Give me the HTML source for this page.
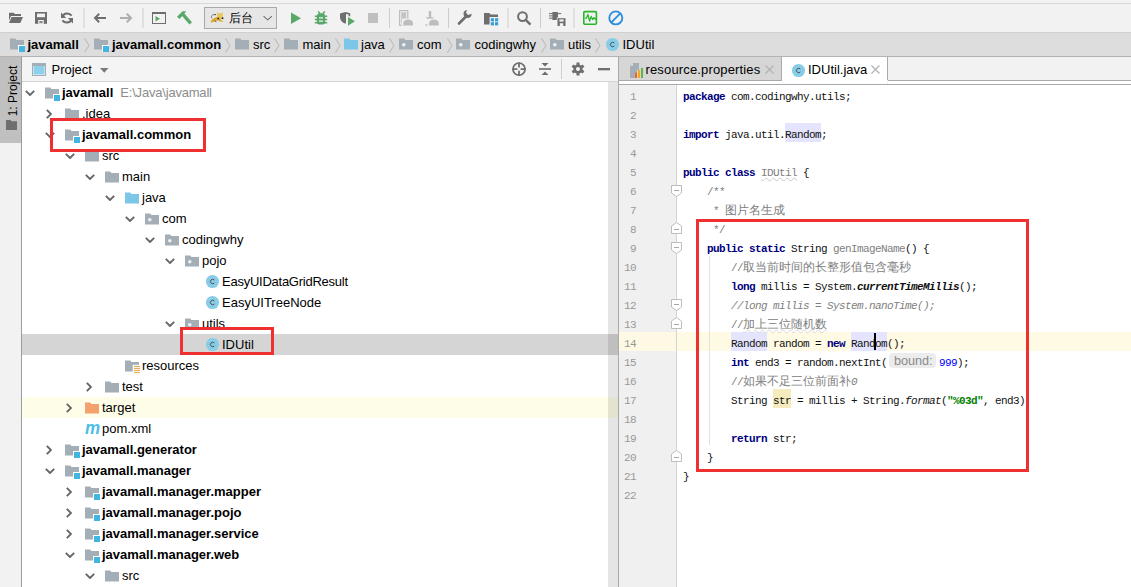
<!DOCTYPE html>
<html><head><meta charset="utf-8"><title>IDEA</title><style>
*{margin:0;padding:0;box-sizing:border-box}
html,body{width:1131px;height:587px;overflow:hidden;background:#f2f2f2}
body{position:relative;font-family:"Liberation Sans",sans-serif;font-size:13px;color:#000}
.a{position:absolute}
.ln{position:absolute;background:#c9c9c9}
svg.i{position:absolute;overflow:visible}
.t{position:absolute;white-space:pre;line-height:21px;height:21px}
.b{font-weight:bold}
.code{position:absolute;left:683px;white-space:pre;font-family:"Liberation Mono",monospace;font-size:11px;letter-spacing:-0.6px;line-height:19px;height:19px;color:#111}
.k{color:#000080;font-weight:bold}
.cm{color:#808080}
.cmi{color:#808080;font-style:italic}
.cj{font-size:12px;letter-spacing:0}
.gr{color:#808080}
.num{position:absolute;left:619px;width:17px;text-align:right;font-family:"Liberation Mono",monospace;font-size:11px;letter-spacing:-0.6px;line-height:19px;color:#999}
</style></head>
<body>

<svg width="0" height="0" style="position:absolute">
<defs>
<symbol id="fold" viewBox="0 0 16 16"><path d="M1 2.5h5.2l1.3 1.5H15v9.5H1z" fill="#a3aeb6"/></symbol>
<symbol id="modf" viewBox="0 0 16 16"><path d="M1 2.5h5.2l1.3 1.5H15v9.5H1z" fill="#a3aeb6"/><rect x="9" y="9" width="7" height="7" fill="#fff"/><rect x="10" y="10" width="6" height="6" fill="#40b6e0"/></symbol>
<symbol id="srcf" viewBox="0 0 16 16"><path d="M1 2.5h5.2l1.3 1.5H15v9.5H1z" fill="#7cc7e8"/></symbol>
<symbol id="tgtf" viewBox="0 0 16 16"><path d="M1 2.5h5.2l1.3 1.5H15v9.5H1z" fill="#f4a26d"/></symbol>
<symbol id="pkgf" viewBox="0 0 16 16"><path d="M1 2.5h5.2l1.3 1.5H15v9.5H1z" fill="#a3aeb6"/><circle cx="5.8" cy="8.8" r="1.8" fill="#eef1f3"/></symbol>
<symbol id="resf" viewBox="0 0 16 16"><path d="M1 2.5h5.2l1.3 1.5H15v9.5H1z" fill="#a3aeb6"/><rect x="8.7" y="6.8" width="8" height="10" fill="#fff"/><path d="M10 8.4h6M10 10.4h6M10 12.4h6M10 14.4h6" stroke="#e3a33c" stroke-width="1"/></symbol>
<symbol id="cls" viewBox="0 0 16 16"><circle cx="8" cy="8" r="7" fill="#87cde8"/><path d="M10 6.4A2.4 2.4 0 1 0 10 9.6" fill="none" stroke="#4a4a4a" stroke-width="1"/></symbol>
<symbol id="chd" viewBox="0 0 10 6"><path d="M0.8 0.8L5 5l4.2-4.2" fill="none" stroke="#666" stroke-width="1.9"/></symbol>
<symbol id="chr" viewBox="0 0 6 10"><path d="M0.8 0.8L5 5l-4.2 4.2" fill="none" stroke="#666" stroke-width="1.9"/></symbol>
<symbol id="foldS" viewBox="0 0 11 12"><path d="M0.5 0.5h10v7.5l-5 3.5l-5-3.5z" fill="#fff" stroke="#bdbdbd"/><path d="M3 5.5h5" stroke="#a8a8a8"/></symbol>
<symbol id="foldE" viewBox="0 0 11 12"><path d="M0.5 11.5h10V4l-5-3.5L0.5 4z" fill="#fff" stroke="#bdbdbd"/><path d="M3 7.5h5" stroke="#a8a8a8"/></symbol>
</defs></svg>

<div class="a" style="left:0px;top:3px;width:1131px;height:1px;background:#d9d9d9"></div>
<div class="a" style="left:0px;top:32px;width:1131px;height:1px;background:#d0d0d0"></div>
<div class="a" style="left:0px;top:33px;width:1131px;height:23px;background:#dddddd"></div>
<div class="a" style="left:0px;top:56px;width:1131px;height:1px;background:#b3b3b3"></div>

<svg class="i" style="left:0;top:4px" width="640" height="28" viewBox="0 4 640 28">
<!-- open folder -->
<path d="M9 12.8h4.6l1.3 1.3H21v2h-10l-2 4.6z" fill="#6e6e6e"/><path d="M11.6 17.1H23l-2.7 5.9H9z" fill="#6e6e6e"/>
<!-- save -->
<path d="M35 12h12v11.8H35z" fill="#6e6e6e"/><rect x="37" y="13.6" width="8" height="3.6" fill="#f2f2f2"/><rect x="38.2" y="20" width="5.6" height="3.8" fill="#f2f2f2"/><rect x="39.4" y="21.2" width="3.2" height="1.6" fill="#6e6e6e"/>
<!-- sync -->
<path d="M71.6 15.6A5.5 5.5 0 0 0 62.3 16.5" fill="none" stroke="#6e6e6e" stroke-width="2"/><path d="M61 12.5v5.6h5.2z" fill="#6e6e6e"/>
<path d="M62.4 20.4A5.5 5.5 0 0 0 71.7 19.5" fill="none" stroke="#6e6e6e" stroke-width="2"/><path d="M73 23.6v-5.6h-5.2z" fill="#6e6e6e"/>
<rect x="83.5" y="8" width="1" height="20" fill="#cdcdcd"/>
<!-- back -->
<path d="M106 18H95M99.2 13.8L95 18l4.2 4.2" fill="none" stroke="#6e6e6e" stroke-width="2"/>
<path d="M120 18h11M126.8 13.8L131 18l-4.2 4.2" fill="none" stroke="#aeaeae" stroke-width="2"/>
<rect x="142.5" y="8" width="1" height="20" fill="#cdcdcd"/>
<!-- terminal -->
<rect x="152.5" y="12.5" width="13" height="11" fill="none" stroke="#6e6e6e" stroke-width="1"/><rect x="152" y="12" width="14" height="2" fill="#6e6e6e"/><path d="M155.5 16v5.5l4.5-2.75z" fill="#59a869"/>
<!-- hammer -->
<path d="M177 16.8L182.6 11.2H186.3L179.6 18.9z" fill="#59a869"/><path d="M180.8 14.6L183.2 12.3L192 22.3L189.5 24.6z" fill="#59a869"/>
<!-- combo -->
<rect x="204.5" y="7.5" width="72" height="21" fill="#e6e6e6" stroke="#a9a9a9"/>
<path d="M210.3 22c1.5-2.6 3.6-4.3 6.2-4.8l4.8-.3 1.6 1.6-2.6 1.1 3.4 2.2-3.6-.4-2.8-1.2-2.6 1.2-2.4 1.2z" fill="#dcaa2c"/><path d="M217 12l1.4 1.2h3l1.4-1.2v5.4l-1.3 1.2h-3.2l-1.3-1.2z" fill="#e9c65c"/><circle cx="218.2" cy="18.4" r=".9" fill="#222"/><circle cx="222.6" cy="18.2" r=".9" fill="#222"/><path d="M211.5 18.2c-.6-2 .6-3.6 2.4-3.6h1.2" fill="none" stroke="#555" stroke-width=".7"/><circle cx="215.2" cy="14.6" r=".7" fill="#222"/><path d="M214.8 20.5l1.6 1.6" stroke="#222" stroke-width=".8"/>
<path d="M263.5 16.2l4.2 3.6 4.2-3.6" fill="none" stroke="#6e6e6e" stroke-width="1.1"/>
<!-- run -->
<path d="M291 12.5v11.5l10-5.75z" fill="#59a869"/>
<!-- debug -->
<path d="M318.2 11.4l2 2.3M324.8 11.4l-2 2.3" stroke="#59a869" stroke-width="1.5"/>
<rect x="316.8" y="13.2" width="8.4" height="11.4" rx="3.4" fill="#59a869"/>
<path d="M314.8 16.3h12.4M314.8 19.5h12.4M314.8 22.7h12.4" stroke="#59a869" stroke-width="1.5"/>
<path d="M319 17.9h4M319 21.1h4" stroke="#f2f2f2" stroke-width="1.3"/>
<!-- coverage -->
<path d="M340 13.4L345.3 12 350.2 13.2V16.3H348.6V14.6L346 14.1V22.3L345.6 23.8C342.4 22.6 340 20 340 17.2z" fill="#6e6e6e"/><path d="M348 16.9v8.9l6.9-4.45z" fill="#59a869"/>
<!-- stop -->
<rect x="368" y="13" width="10" height="10" fill="#c0c0c0"/>
<rect x="389" y="8" width="1" height="20" fill="#cdcdcd"/>
<!-- avd -->
<rect x="399.6" y="10.6" width="8.2" height="14.6" fill="none" stroke="#bdbdbd" stroke-width="1.2"/><rect x="401.2" y="12.2" width="5" height="11" fill="#c4c4c4"/>
<rect x="402" y="18.6" width="12" height="7.4" fill="#f2f2f2"/><path d="M403.2 25.6v-2.2c0-2.4 2.2-3.8 4.9-3.8s4.9 1.4 4.9 3.8v2.2z" fill="#bdbdbd"/>
<!-- sdk dl -->
<path d="M430 11v8" stroke="#bdbdbd" stroke-width="2.4"/><path d="M425.8 17.2l4.2 4.2 4.2-4.2z" fill="#bdbdbd"/>
<rect x="428" y="18.6" width="12" height="7.4" fill="#f2f2f2"/><path d="M429 25.6v-2.2c0-2.4 2.2-3.8 4.9-3.8s4.9 1.4 4.9 3.8v2.2z" fill="#bdbdbd"/><rect x="425" y="24.4" width="2.6" height="1.2" fill="#bdbdbd"/>
<rect x="448" y="8" width="1" height="20" fill="#cdcdcd"/>
<!-- wrench -->
<path d="M459 23.5l6.5-6.5" stroke="#6e6e6e" stroke-width="2.6" stroke-linecap="round"/><path d="M471.5 13.5a4 4 0 1 1-4.5-3.4l-1 2.7 2.1 2.1 2.9-1z" fill="#6e6e6e"/>
<!-- project structure -->
<path d="M484 13h5.2l1.5 1.6h7.3v6.2h-4v3.8H484z" fill="#6e6e6e"/><rect x="489.6" y="17" width="9.8" height="9.2" fill="#f2f2f2"/><rect x="490.8" y="18.2" width="3.2" height="3.2" fill="#389fd6"/><rect x="495" y="18.2" width="3.2" height="3.2" fill="#389fd6"/><rect x="490.8" y="22.2" width="3.2" height="3.2" fill="#389fd6"/><rect x="495" y="22.2" width="3.2" height="3.2" fill="#389fd6"/>
<rect x="507.5" y="8" width="1" height="20" fill="#cdcdcd"/>
<!-- search -->
<circle cx="522.5" cy="16.6" r="4.4" fill="none" stroke="#6e6e6e" stroke-width="2"/><path d="M525.7 19.8l4.8 4.8" stroke="#6e6e6e" stroke-width="2.4"/>
<rect x="540" y="8" width="1" height="20" fill="#cdcdcd"/>
<!-- sdk manager -->
<rect x="552.3" y="12" width="5.6" height="8" fill="#6e6e6e"/><path d="M549 13.6h3.3M549 15.9h3.3M549 18.2h3.3M557.9 13.6h3.3" stroke="#6e6e6e" stroke-width="1"/>
<rect x="556.8" y="17.6" width="8.6" height="8.4" fill="#f2f2f2"/><rect x="557.5" y="18.2" width="8" height="7.8" fill="#6e6e6e"/><rect x="559.4" y="19.4" width="4.2" height="2.2" fill="#f2f2f2"/><rect x="559.8" y="23.2" width="3.4" height="2.8" fill="#f2f2f2"/>
<rect x="573.5" y="8" width="1" height="20" fill="#cdcdcd"/>
<!-- monitor -->
<rect x="583.8" y="11.6" width="12.6" height="12.6" rx="1" fill="none" stroke="#28b62c" stroke-width="1.6"/><path d="M585.2 18.3l1.3-.3 1.4-3.6 1.7 6.6 1.6-4.6 1.4 3.2 1.3-2 1.2 1.6 1.2-.6" fill="none" stroke="#28b62c" stroke-width="1.3" stroke-linejoin="round"/>
<!-- blue no -->
<circle cx="615.8" cy="17.9" r="6.5" fill="none" stroke="#2d8fe0" stroke-width="1.9"/><path d="M611.3 22.4l9-9" stroke="#2d8fe0" stroke-width="1.9"/>
</svg>

<div class="t" style="left:229px;top:8px;font-size:12px;line-height:20px;color:#000">后台</div>
<svg class="i" style="left:9px;top:36px" width="16" height="16"><use href="#modf"/></svg>
<div class="t" style="left:27.5px;top:34px;font-weight:bold;line-height:21px">javamall</div>
<svg class="i" style="left:93px;top:36px" width="16" height="16"><use href="#modf"/></svg>
<div class="t" style="left:112px;top:34px;font-weight:bold;line-height:21px">javamall.common</div>
<svg class="i" style="left:234px;top:36px" width="16" height="16"><use href="#fold"/></svg>
<div class="t" style="left:253px;top:34px;line-height:21px">src</div>
<svg class="i" style="left:283px;top:36px" width="16" height="16"><use href="#fold"/></svg>
<div class="t" style="left:302.5px;top:34px;line-height:21px">main</div>
<svg class="i" style="left:342.5px;top:36px" width="16" height="16"><use href="#srcf"/></svg>
<div class="t" style="left:361px;top:34px;line-height:21px">java</div>
<svg class="i" style="left:397.5px;top:36px" width="16" height="16"><use href="#pkgf"/></svg>
<div class="t" style="left:417px;top:34px;line-height:21px">com</div>
<svg class="i" style="left:455px;top:36px" width="16" height="16"><use href="#pkgf"/></svg>
<div class="t" style="left:474.5px;top:34px;line-height:21px">codingwhy</div>
<svg class="i" style="left:548.5px;top:36px" width="16" height="16"><use href="#pkgf"/></svg>
<div class="t" style="left:568px;top:34px;line-height:21px">utils</div>
<svg class="i" style="left:605px;top:37px" width="15" height="15"><use href="#cls"/></svg>
<div class="t" style="left:622.5px;top:34px;line-height:21px">IDUtil</div>
<svg class="i" style="left:84px;top:38px" width="6" height="16"><path d="M0.5 0.5L5 7.5 0.5 14.5" fill="none" stroke="#b5b5b5" stroke-width="1"/></svg>
<svg class="i" style="left:224.5px;top:38px" width="6" height="16"><path d="M0.5 0.5L5 7.5 0.5 14.5" fill="none" stroke="#b5b5b5" stroke-width="1"/></svg>
<svg class="i" style="left:274px;top:38px" width="6" height="16"><path d="M0.5 0.5L5 7.5 0.5 14.5" fill="none" stroke="#b5b5b5" stroke-width="1"/></svg>
<svg class="i" style="left:334.5px;top:38px" width="6" height="16"><path d="M0.5 0.5L5 7.5 0.5 14.5" fill="none" stroke="#b5b5b5" stroke-width="1"/></svg>
<svg class="i" style="left:389px;top:38px" width="6" height="16"><path d="M0.5 0.5L5 7.5 0.5 14.5" fill="none" stroke="#b5b5b5" stroke-width="1"/></svg>
<svg class="i" style="left:446.5px;top:38px" width="6" height="16"><path d="M0.5 0.5L5 7.5 0.5 14.5" fill="none" stroke="#b5b5b5" stroke-width="1"/></svg>
<svg class="i" style="left:540.5px;top:38px" width="6" height="16"><path d="M0.5 0.5L5 7.5 0.5 14.5" fill="none" stroke="#b5b5b5" stroke-width="1"/></svg>
<svg class="i" style="left:595px;top:38px" width="6" height="16"><path d="M0.5 0.5L5 7.5 0.5 14.5" fill="none" stroke="#b5b5b5" stroke-width="1"/></svg>
<div class="a" style="left:0px;top:57px;width:21px;height:86px;background:#c0c0c0"></div>
<div class="a" style="left:21px;top:57px;width:1px;height:530px;background:#9c9c9c"></div>
<div class="a" style="left:-17.5px;top:84px;width:60px;height:14px;transform:rotate(-90deg);font-size:12px;line-height:14px;text-align:center;color:#000;white-space:pre"><u style="text-decoration:none">1</u>: Project</div>
<svg class="i" style="left:6px;top:120px" width="11" height="10"><path d="M0 0h4.5l1 1.2H11V10H0z" fill="#6e6e6e"/></svg>
<div class="a" style="left:22px;top:57px;width:596px;height:24px;background:#f4f4f4"></div>
<div class="a" style="left:22px;top:81px;width:596px;height:1px;background:#d4d4d4"></div>
<div class="a" style="left:22px;top:82px;width:596px;height:505px;background:#fff"></div>
<svg class="i" style="left:32px;top:63px" width="14" height="13"><rect x="0.5" y="0.5" width="13" height="12" fill="none" stroke="#a3aeb6"/><rect x="0" y="0" width="14" height="3" fill="#a3aeb6"/><rect x="1.5" y="3" width="11" height="8.5" fill="#8dd0ec"/></svg>
<div class="t" style="left:51.5px;top:59px;line-height:21px">Project</div>
<svg class="i" style="left:100px;top:68px" width="9" height="5"><path d="M0 0h8.5L4.25 4.8z" fill="#7a7a7a"/></svg>
<svg class="i" style="left:500px;top:56px" width="120" height="26" viewBox="500 56 120 26">
<circle cx="519" cy="69.1" r="6.1" fill="none" stroke="#6e6e6e" stroke-width="1.7"/><path d="M519 62.5V67.5M519 70.7V75.7M512.4 69.1H517.4M520.6 69.1H525.6" stroke="#6e6e6e" stroke-width="1.8"/>
<rect x="539" y="68.2" width="12" height="1.6" fill="#6e6e6e"/><path d="M541.5 63h7l-3.5 3.6z M541.5 75h7l-3.5-3.6z" fill="#6e6e6e"/>
<rect x="561" y="59" width="1" height="20" fill="#cfcfcf"/>
<g transform="translate(578 69)" fill="#6e6e6e"><circle r="4.6"/><g id="gt"><rect x="-1.5" y="-6.5" width="3" height="13"/></g><rect x="-1.5" y="-6.5" width="3" height="13" transform="rotate(60)"/><rect x="-1.5" y="-6.5" width="3" height="13" transform="rotate(120)"/><circle r="2" fill="#f4f4f4"/></g>
<rect x="598" y="68" width="12" height="2.3" fill="#6e6e6e"/>
</svg>
<div class="a" style="left:22px;top:334px;width:596px;height:21px;background:#d5d5d5"></div>
<div class="a" style="left:22px;top:397px;width:596px;height:21px;background:#fdfde8"></div>
<svg class="i" style="left:25px;top:90px" width="10" height="6"><use href="#chd"/></svg>
<svg class="i" style="left:44px;top:85px" width="16" height="16"><use href="#modf"/></svg>
<div class="t" style="left:62px;top:82px;"><span class="b">javamall</span><span style="color:#8c8c8c;margin-left:7px;letter-spacing:-0.2px">E:\Java\javamall</span></div>
<svg class="i" style="left:46px;top:109px" width="6" height="10"><use href="#chr"/></svg>
<svg class="i" style="left:64px;top:106px" width="16" height="16"><use href="#fold"/></svg>
<div class="t" style="left:82px;top:103px;">.idea</div>
<svg class="i" style="left:45px;top:132px" width="10" height="6"><use href="#chd"/></svg>
<svg class="i" style="left:64px;top:127px" width="16" height="16"><use href="#modf"/></svg>
<div class="t" style="left:82px;top:124px;"><span class="b">javamall.common</span></div>
<svg class="i" style="left:65px;top:153px" width="10" height="6"><use href="#chd"/></svg>
<svg class="i" style="left:84px;top:148px" width="16" height="16"><use href="#fold"/></svg>
<div class="t" style="left:102px;top:145px;">src</div>
<svg class="i" style="left:85px;top:174px" width="10" height="6"><use href="#chd"/></svg>
<svg class="i" style="left:104px;top:169px" width="16" height="16"><use href="#fold"/></svg>
<div class="t" style="left:122px;top:166px;">main</div>
<svg class="i" style="left:105px;top:195px" width="10" height="6"><use href="#chd"/></svg>
<svg class="i" style="left:124px;top:190px" width="16" height="16"><use href="#srcf"/></svg>
<div class="t" style="left:142px;top:187px;">java</div>
<svg class="i" style="left:125px;top:216px" width="10" height="6"><use href="#chd"/></svg>
<svg class="i" style="left:144px;top:211px" width="16" height="16"><use href="#pkgf"/></svg>
<div class="t" style="left:162px;top:208px;">com</div>
<svg class="i" style="left:145px;top:237px" width="10" height="6"><use href="#chd"/></svg>
<svg class="i" style="left:164px;top:232px" width="16" height="16"><use href="#pkgf"/></svg>
<div class="t" style="left:182px;top:229px;">codingwhy</div>
<svg class="i" style="left:165px;top:258px" width="10" height="6"><use href="#chd"/></svg>
<svg class="i" style="left:184px;top:253px" width="16" height="16"><use href="#pkgf"/></svg>
<div class="t" style="left:202px;top:250px;">pojo</div>
<svg class="i" style="left:205px;top:274px" width="15" height="15"><use href="#cls"/></svg>
<div class="t" style="left:222px;top:271px;"><span style="letter-spacing:-0.25px">EasyUIDataGridResult</span></div>
<svg class="i" style="left:205px;top:295px" width="15" height="15"><use href="#cls"/></svg>
<div class="t" style="left:222px;top:292px;">EasyUITreeNode</div>
<svg class="i" style="left:165px;top:321px" width="10" height="6"><use href="#chd"/></svg>
<svg class="i" style="left:184px;top:316px" width="16" height="16"><use href="#pkgf"/></svg>
<div class="t" style="left:202px;top:313px;">utils</div>
<svg class="i" style="left:205px;top:337px" width="15" height="15"><use href="#cls"/></svg>
<div class="t" style="left:222px;top:334px;">IDUtil</div>
<svg class="i" style="left:124px;top:358px" width="16" height="16"><use href="#resf"/></svg>
<div class="t" style="left:142px;top:355px;">resources</div>
<svg class="i" style="left:86px;top:382px" width="6" height="10"><use href="#chr"/></svg>
<svg class="i" style="left:104px;top:379px" width="16" height="16"><use href="#fold"/></svg>
<div class="t" style="left:122px;top:376px;">test</div>
<svg class="i" style="left:66px;top:403px" width="6" height="10"><use href="#chr"/></svg>
<svg class="i" style="left:84px;top:400px" width="16" height="16"><use href="#tgtf"/></svg>
<div class="t" style="left:102px;top:397px;">target</div>
<div class="a" style="left:85px;top:418px;font:italic bold 17px/21px 'Liberation Sans';color:#4cbde6;transform:scaleY(1.12);transform-origin:0 16px">m</div>
<div class="t" style="left:102px;top:418px;">pom.xml</div>
<svg class="i" style="left:46px;top:445px" width="6" height="10"><use href="#chr"/></svg>
<svg class="i" style="left:64px;top:442px" width="16" height="16"><use href="#modf"/></svg>
<div class="t" style="left:82px;top:439px;"><span class="b">javamall.generator</span></div>
<svg class="i" style="left:45px;top:468px" width="10" height="6"><use href="#chd"/></svg>
<svg class="i" style="left:64px;top:463px" width="16" height="16"><use href="#modf"/></svg>
<div class="t" style="left:82px;top:460px;"><span class="b">javamall.manager</span></div>
<svg class="i" style="left:66px;top:487px" width="6" height="10"><use href="#chr"/></svg>
<svg class="i" style="left:84px;top:484px" width="16" height="16"><use href="#modf"/></svg>
<div class="t" style="left:102px;top:481px;"><span class="b">javamall.manager.mapper</span></div>
<svg class="i" style="left:66px;top:508px" width="6" height="10"><use href="#chr"/></svg>
<svg class="i" style="left:84px;top:505px" width="16" height="16"><use href="#modf"/></svg>
<div class="t" style="left:102px;top:502px;"><span class="b">javamall.manager.pojo</span></div>
<svg class="i" style="left:66px;top:529px" width="6" height="10"><use href="#chr"/></svg>
<svg class="i" style="left:84px;top:526px" width="16" height="16"><use href="#modf"/></svg>
<div class="t" style="left:102px;top:523px;"><span class="b">javamall.manager.service</span></div>
<svg class="i" style="left:65px;top:552px" width="10" height="6"><use href="#chd"/></svg>
<svg class="i" style="left:84px;top:547px" width="16" height="16"><use href="#modf"/></svg>
<div class="t" style="left:102px;top:544px;"><span class="b">javamall.manager.web</span></div>
<svg class="i" style="left:85px;top:573px" width="10" height="6"><use href="#chd"/></svg>
<svg class="i" style="left:104px;top:568px" width="16" height="16"><use href="#fold"/></svg>
<div class="t" style="left:122px;top:565px;">src</div>
<div class="a" style="left:608px;top:82px;width:10px;height:505px;background:rgba(0,0,0,0.1)"></div>
<div class="a" style="left:50px;top:118px;width:156px;height:34px;border:3px solid #ee3030"></div>
<div class="a" style="left:180px;top:327px;width:94px;height:28px;border:3px solid #ee3030"></div>
<div class="a" style="left:618px;top:57px;width:1px;height:530px;background:#a9a9a9"></div>
<div class="a" style="left:619px;top:57px;width:512px;height:23px;background:#f2f2f2"></div>
<div class="a" style="left:619px;top:57px;width:162px;height:23px;background:#d6d6d6"></div>
<div class="a" style="left:781px;top:57px;width:1px;height:23px;background:#a9a9a9"></div>
<div class="a" style="left:782px;top:57px;width:105px;height:27px;background:#fff"></div>
<div class="a" style="left:887px;top:57px;width:1px;height:23px;background:#a9a9a9"></div>
<div class="a" style="left:619px;top:80px;width:163px;height:1px;background:#a9a9a9"></div>
<div class="a" style="left:888px;top:80px;width:243px;height:1px;background:#a9a9a9"></div>
<div class="a" style="left:619px;top:81px;width:163px;height:3px;background:#fff"></div>
<div class="a" style="left:888px;top:81px;width:243px;height:3px;background:#fff"></div>
<div class="a" style="left:619px;top:84px;width:512px;height:1px;background:#a9a9a9"></div>
<svg class="i" style="left:630px;top:63px" width="14" height="15"><path d="M0 3l3-3h6v15H0z" fill="#a3aeb6"/><path d="M3 0v3H0z" fill="#d6d6d6"/><rect x="5" y="9.5" width="2" height="5.5" fill="#f26522"/><rect x="8" y="7" width="2" height="8" fill="#f5a623"/><rect x="11" y="5" width="2" height="10" fill="#62b543"/><rect x="10" y="5" width="1" height="10" fill="#d6d6d6"/><rect x="7" y="7" width="1" height="8" fill="#d6d6d6"/></svg>
<div class="t" style="left:645.5px;top:59px;line-height:21px;letter-spacing:0.15px">resource.properties</div>
<svg class="i" style="left:765px;top:65px" width="9" height="9"><path d="M.5 .5l8 8M8.5 .5l-8 8" stroke="#b3b3b3" stroke-width="1.2"/></svg>
<svg class="i" style="left:791px;top:63px" width="15" height="15"><use href="#cls"/></svg>
<div class="t" style="left:808px;top:59px;line-height:21px">IDUtil.java</div>
<svg class="i" style="left:871px;top:65px" width="9" height="9"><path d="M.5 .5l8 8M8.5 .5l-8 8" stroke="#b3b3b3" stroke-width="1.2"/></svg>
<div class="a" style="left:619px;top:85px;width:512px;height:502px;background:#fff"></div>
<div class="a" style="left:619px;top:85px;width:57px;height:502px;background:#f0f0f0"></div>
<div class="a" style="left:676px;top:85px;width:1px;height:502px;background:#d4d4d4"></div>
<div class="a" style="left:619px;top:332px;width:57px;height:19px;background:#fdf9e4"></div>
<div class="a" style="left:677px;top:332px;width:454px;height:19px;background:#fffae3"></div>
<div class="num" style="top:88px">1</div>
<div class="num" style="top:107px">2</div>
<div class="num" style="top:126px">3</div>
<div class="num" style="top:145px">4</div>
<div class="num" style="top:164px">5</div>
<div class="num" style="top:183px">6</div>
<div class="num" style="top:202px">7</div>
<div class="num" style="top:221px">8</div>
<div class="num" style="top:240px">9</div>
<div class="num" style="top:259px">10</div>
<div class="num" style="top:278px">11</div>
<div class="num" style="top:297px">12</div>
<div class="num" style="top:316px">13</div>
<div class="num" style="top:335px">14</div>
<div class="num" style="top:354px">15</div>
<div class="num" style="top:373px">16</div>
<div class="num" style="top:392px">17</div>
<div class="num" style="top:411px">18</div>
<div class="num" style="top:430px">19</div>
<div class="num" style="top:449px">20</div>
<div class="num" style="top:468px">21</div>
<div class="num" style="top:487px">22</div>
<svg class="i" style="left:671px;top:185px" width="11" height="12"><use href="#foldS"/></svg>
<svg class="i" style="left:671px;top:222px" width="11" height="12"><use href="#foldE"/></svg>
<svg class="i" style="left:671px;top:242px" width="11" height="12"><use href="#foldS"/></svg>
<svg class="i" style="left:671px;top:299px" width="11" height="12"><use href="#foldS"/></svg>
<svg class="i" style="left:671px;top:317px" width="11" height="12"><use href="#foldE"/></svg>
<svg class="i" style="left:671px;top:450px" width="11" height="12"><use href="#foldE"/></svg>
<div class="a" style="left:709px;top:256px;width:1px;height:189px;background:#e2e2e2"></div>
<div class="a" style="left:785px;top:123px;width:36px;height:19px;background:#e4e4ff"></div>
<div class="a" style="left:731px;top:332px;width:36px;height:19px;background:#e4e4ff"></div>
<div class="a" style="left:851px;top:332px;width:36px;height:19px;background:#e4e4ff"></div>
<div class="a" style="left:773px;top:389px;width:18px;height:19px;background:#f6ebbd"></div>
<div class="code" style="top:88px"><span class="k">package</span> com.codingwhy.utils;</div>
<div class="code" style="top:126px"><span class="k">import</span> java.util.Random;</div>
<div class="code" style="top:164px"><span class="k">public</span> <span class="k">class</span> <span class="gr" style="text-decoration:underline wavy #c8c8c8;text-decoration-thickness:1px">IDUtil</span> {</div>
<div class="code" style="top:183px">    <span class="cm">/**</span></div>
<div class="code" style="top:202px">     <span class="cm">* <span class="cj">图片名生成</span></span></div>
<div class="code" style="top:221px">     <span class="cm">*/</span></div>
<div class="code" style="top:240px">    <span class="k">public</span> <span class="k">static</span> String <span class="gr">genImageName</span>() {</div>
<div class="code" style="top:259px">        <span class="cm">//<span class="cj">取当前时间的长整形值包含毫秒</span></span></div>
<div class="code" style="top:278px">        <span class="k">long</span> millis = System.<i class="b">currentTimeMillis</i>();</div>
<div class="code" style="top:297px">        <span class="cmi">//long millis = System.nanoTime();</span></div>
<div class="code" style="top:316px">        <span class="cm">//<span class="cj" style="text-decoration:underline wavy #d8d8d8;text-decoration-thickness:1px">加上三位随机数</span></span></div>
<div class="code" style="top:335px">        Random random = <span class="k">new</span> Random();</div>
<div class="code" style="top:354px">        <span class="k">int</span> end3 = random.nextInt(<span style="display:inline-block;width:52px"></span><span style="color:#0000ff">999</span>);</div>
<div class="code" style="top:373px">        <span class="cm">//<span class="cj">如果不足三位前面补</span><i>0</i></span></div>
<div class="code" style="top:392px">        String str = millis + String.<i>format</i>(<span style="color:#008000;font-weight:bold">"%03d"</span>, end3)</div>
<div class="code" style="top:430px">        <span class="k">return</span> str;</div>
<div class="code" style="top:449px">    }</div>
<div class="code" style="top:468px">}</div>
<div class="a" style="left:889px;top:353px;width:47px;height:15px;background:#ececec;border-radius:4px"></div>
<div class="t" style="left:894px;top:352px;font-size:12.6px;line-height:19px;color:#8a8a8a">bound:</div>
<div class="a" style="left:874px;top:333px;width:2px;height:17px;background:#000"></div>
<div class="a" style="left:696px;top:219px;width:333px;height:253px;border:3px solid #ee3030"></div>
</body></html>
